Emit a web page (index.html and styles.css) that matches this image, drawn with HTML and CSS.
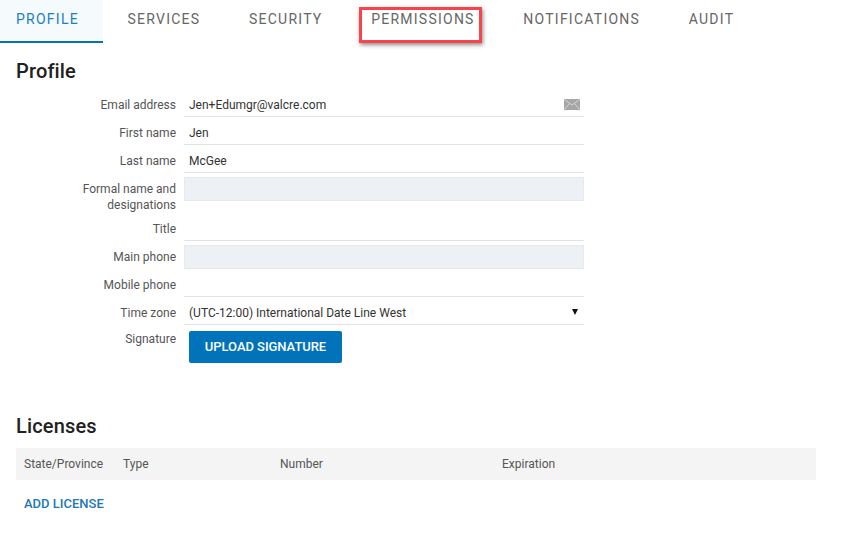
FILE: index.html
```html
<!DOCTYPE html>
<html lang="en">
<head>
<meta charset="utf-8">
<title>Profile</title>
<link rel="stylesheet" href="styles.css">
</head>
<body>
<nav class="tabs">
  <a class="tab tab-active">Profile</a>
  <a class="tab">Services</a>
  <a class="tab">Security</a>
  <a class="tab tab-marked">Permissions</a>
  <a class="tab">Notifications</a>
  <a class="tab">Audit</a>
</nav>
<main class="page">
  <h2 class="heading heading-profile">Profile</h2>
  <div class="form">
    <div class="row">
      <label class="label">Email address</label>
      <div class="field field-line field-email">
        <span>Jen+Edumgr@valcre.com</span>
        <svg class="mail" width="16" height="11" viewBox="0 0 16 11" aria-hidden="true">
          <rect width="16" height="11" fill="#a6a6a6"/>
          <path d="M0.5 0.5 L8 6 L15.5 0.5 M0.5 10.5 L5.5 4.5 M15.5 10.5 L10.5 4.5" fill="none" stroke="#d6d6d6" stroke-width="1"/>
        </svg>
      </div>
    </div>
    <div class="row">
      <label class="label">First name</label>
      <div class="field field-line">Jen</div>
    </div>
    <div class="row">
      <label class="label">Last name</label>
      <div class="field field-line">McGee</div>
    </div>
    <div class="row row-tall">
      <label class="label">Formal name and designations</label>
      <div class="field field-fill"></div>
    </div>
    <div class="row">
      <label class="label">Title</label>
      <div class="field field-line"></div>
    </div>
    <div class="row">
      <label class="label">Main phone</label>
      <div class="field field-fill"></div>
    </div>
    <div class="row">
      <label class="label">Mobile phone</label>
      <div class="field field-line"></div>
    </div>
    <div class="row">
      <label class="label">Time zone</label>
      <div class="field field-line field-select">
        <span>(UTC-12:00) International Date Line West</span>
        <span class="caret"></span>
      </div>
    </div>
    <div class="row row-upload">
      <label class="label label-upload">Signature</label>
      <button class="button" type="button">Upload signature</button>
    </div>
  </div>
  <h2 class="heading heading-licenses">Licenses</h2>
  <div class="table-head">
    <span>State/Province</span>
    <span>Type</span>
    <span>Number</span>
    <span>Expiration</span>
  </div>
  <a class="add-link">Add license</a>
</main>
</body>
</html>
```

FILE: styles.css
```css
* {
  box-sizing: border-box;
}

html,
body {
  margin: 0;
  padding: 0;
  background: #fff;
}

body {
  font-family: Roboto, "Liberation Sans", sans-serif;
  font-size: 12px;
  color: #333;
  height: 534px;
  overflow: hidden;
}

.tabs {
  display: flex;
  height: 43px;
}

.tab {
  position: relative;
  padding: 11px 24.3px 0;
  font-size: 14px;
  line-height: 16px;
  letter-spacing: 1.25px;
  text-transform: uppercase;
  color: #666;
}

.tab-active {
  padding-left: 16px;
  color: #1a7fc1;
  background: #f5fafd;
  border-bottom: 2px solid #0073bb;
}

.tab-marked::after {
  content: "";
  position: absolute;
  left: 12px;
  right: 17px;
  top: 7px;
  height: 30px;
  border: 3px solid #f8434b;
  box-shadow: 1px 2px 4px rgba(0, 0, 0, 0.45);
}

.page {
  padding: 0 16px;
}

.heading {
  margin: 0;
  font-size: 20px;
  line-height: 24px;
  font-weight: 500;
  letter-spacing: 0.15px;
  color: #212121;
}

.heading-profile {
  margin-top: 16px;
  margin-bottom: 6px;
}

.form {
  display: flex;
  flex-direction: column;
}

.row {
  display: grid;
  grid-template-columns: 160px 400px;
  column-gap: 8px;
  height: 28px;
}

.row-tall {
  height: 40px;
}

.row-upload {
  height: 38px;
}

.label {
  padding-top: 8px;
  text-align: right;
  line-height: 16px;
  color: #555;
}

.label-upload {
  padding-top: 6px;
}

.field {
  height: 28px;
  padding: 8px 5px 0;
  line-height: 16px;
  color: #333;
}

.field-line {
  border-bottom: 1px solid #e2e2e2;
}

.field-fill {
  height: 24px;
  margin-top: 4px;
  background: #edf1f5;
  border: 1px solid #e6eaee;
}

.field-email,
.field-select {
  display: flex;
  justify-content: space-between;
  align-items: flex-start;
}

.mail {
  margin-top: 2px;
  margin-right: -1px;
}

.caret {
  width: 0;
  height: 0;
  margin-top: 4px;
  margin-right: 1px;
  border-left: 3px solid transparent;
  border-right: 3px solid transparent;
  border-top: 6px solid #111;
}

.button {
  justify-self: start;
  width: 153px;
  height: 32px;
  margin: 6px 0 0 5px;
  padding: 0 0 2px;
  border: 0;
  border-radius: 2px;
  background: #0073bb;
  color: #fff;
  font-family: inherit;
  font-size: 13px;
  font-weight: 500;
  letter-spacing: -0.05px;
  text-transform: uppercase;
}

.heading-licenses {
  margin-top: 51px;
}

.table-head {
  display: grid;
  grid-template-columns: 99px 157px 222px 1fr;
  align-items: center;
  width: 800px;
  height: 32px;
  margin-top: 10px;
  padding-left: 8px;
  background: #f4f4f4;
  color: #555;
}

.add-link {
  display: block;
  margin: 16px 0 0 8px;
  font-size: 13px;
  line-height: 16px;
  font-weight: 500;
  text-transform: uppercase;
  color: #2177b8;
}
```
